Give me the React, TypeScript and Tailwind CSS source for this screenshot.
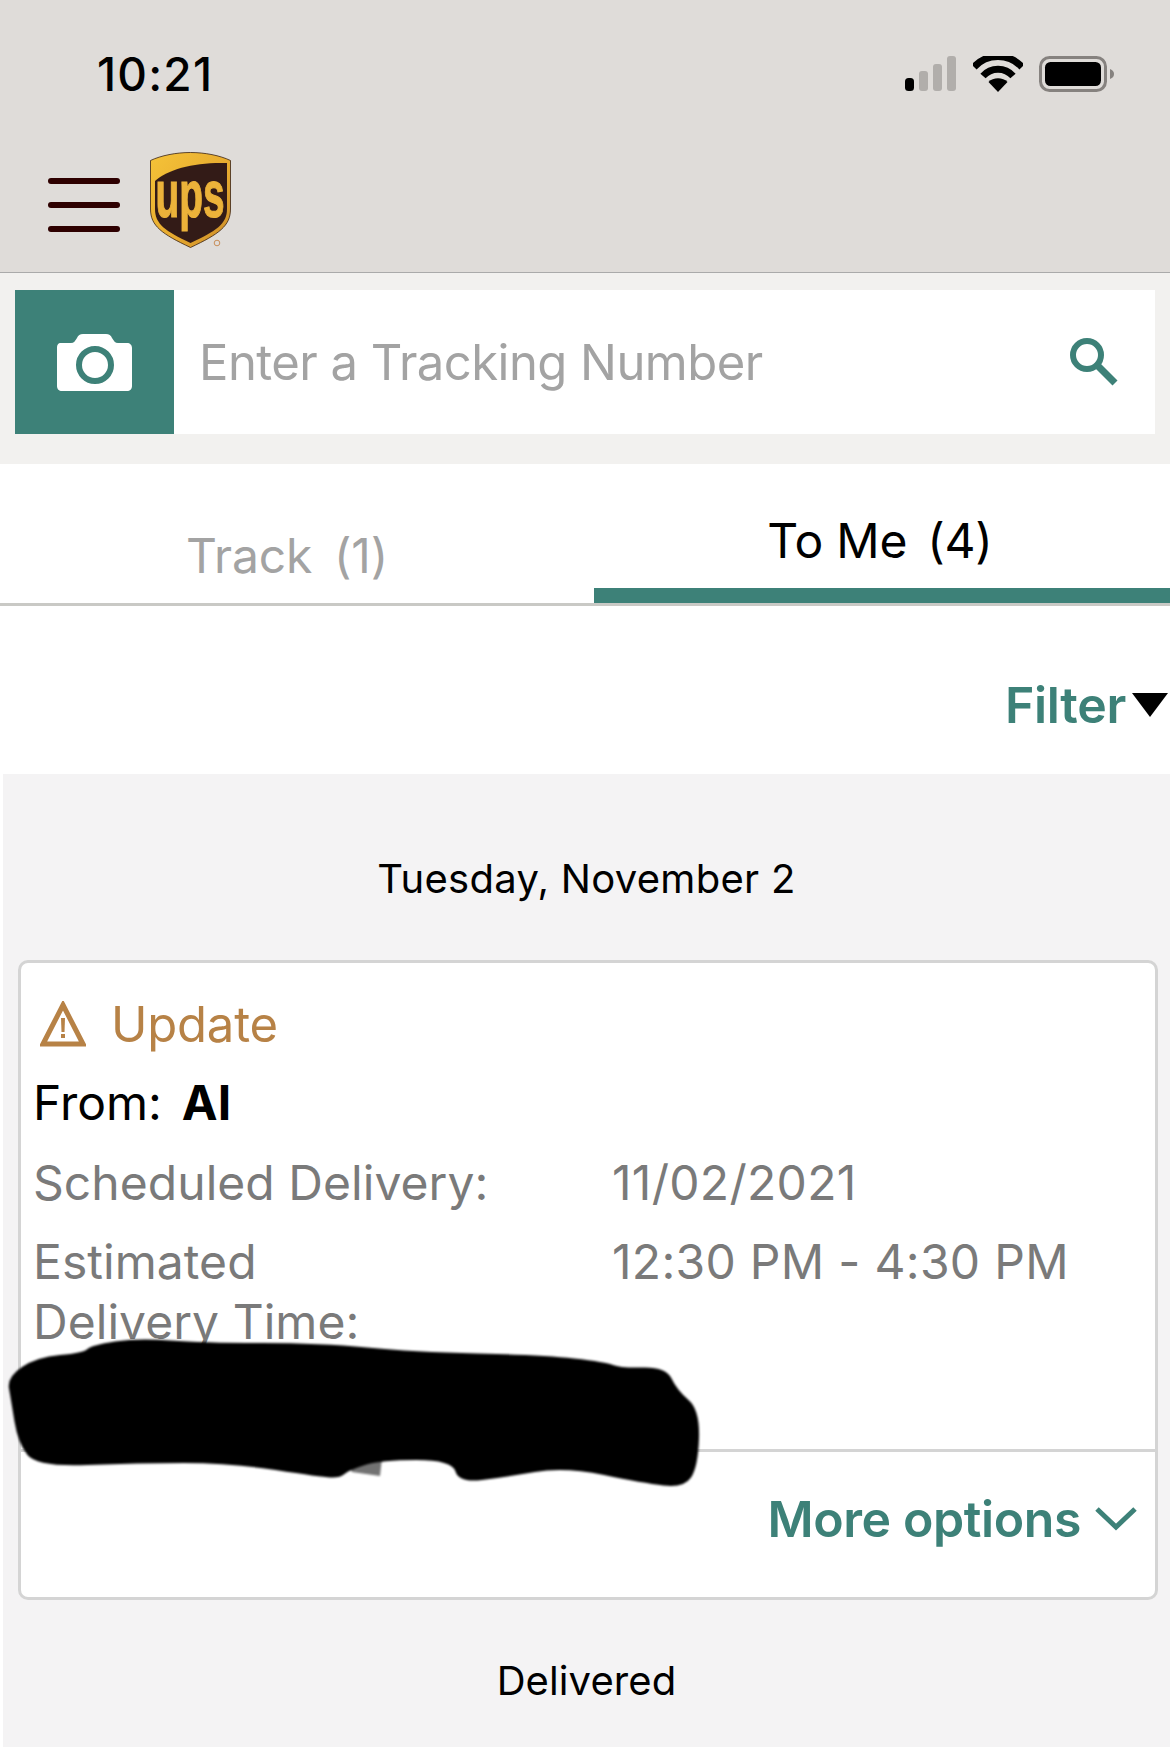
function UpsLogo() {
  return (
    <svg viewBox="0 0 84 98" className="h-[98px] w-[84px]">
      <defs>
        <linearGradient id="gold" x1="0" y1="0" x2="1" y2="1">
          <stop offset="0" stopColor="#f5c338" />
          <stop offset="0.6" stopColor="#e6a92f" />
          <stop offset="1" stopColor="#c98a28" />
        </linearGradient>
      </defs>
      <path
        d="M40.500 0.500C26 0.500 11 3.500 0.500 8.500V57C0.500 74 12 82 40.500 95.500C69 82 80.500 74 80.500 57V8.500C70 3.500 55 0.500 40.500 0.500Z"
        fill="url(#gold)"
        stroke="#3a2212"
        strokeWidth="0.8"
      />
      <path
        d="M77 11V57C77 72 66 79 40.500 91C15 79 5 72 5 57V29C18 17 45 10 77 11Z"
        fill="#331b17"
      />
      <text
        x="0"
        y="0"
        transform="translate(40 65) scale(0.58 1)"
        textAnchor="middle"
        fill="#ecb23a"
        stroke="#ecb23a"
        strokeWidth="1.200"
        fontFamily="Liberation Sans, sans-serif"
        fontWeight="700"
        fontSize="67"
      >
        ups
      </text>
      <circle cx="67" cy="91" r="2.800" fill="none" stroke="#c98f5a" strokeWidth="1" />
    </svg>
  );
}

function StatusIcons() {
  return (
    <div className="flex items-center">
      <svg viewBox="0 0 52 36" className="h-[36px] w-[52px]">
        <rect x="0" y="22" width="9" height="13" rx="3.500" fill="#000" />
        <rect x="14" y="15" width="9" height="20" rx="3" fill="#b1aeab" />
        <rect x="28" y="8" width="9" height="27" rx="3" fill="#b1aeab" />
        <rect x="42" y="0" width="9" height="35" rx="3" fill="#b1aeab" />
      </svg>
      <svg viewBox="0 0 50 36" className="ml-[16px] h-[36px] w-[50px]">
        <path d="M1 11C14 -3 36 -3 49 11" fill="none" stroke="#000" strokeWidth="7" strokeLinejoin="round" />
        <path d="M10 20C18 11 32 11 40 20" fill="none" stroke="#000" strokeWidth="7" />
        <path d="M25 36L15.500 26C20 21 30 21 34.500 26Z" fill="#000" />
      </svg>
      <svg viewBox="0 0 76 36" className="ml-[16px] h-[36px] w-[76px]">
        <rect x="1.500" y="1.500" width="65" height="33" rx="9" fill="none" stroke="#86827f" strokeWidth="3" />
        <rect x="6" y="6" width="56" height="24" rx="5.500" fill="#000" />
        <path d="M71 13C74 14 75 16 75 18C75 20 74 22 71 23Z" fill="#86827f" />
      </svg>
    </div>
  );
}

const blobPoints = [
  [7, 1377], [37, 1357], [83, 1353], [92, 1345], [138, 1338], [202, 1343], [321, 1343], [413, 1352],
  [542, 1355], [606, 1362], [620, 1368], [666, 1367], [677, 1390], [700, 1410], [698, 1467], [684, 1488],
  [643, 1483], [565, 1467], [505, 1477], [459, 1483], [452, 1460], [381, 1460], [349, 1470], [340, 1478],
  [321, 1477], [230, 1463], [138, 1463], [37, 1467], [18, 1443], [11, 1400],
];

// rounds the corners of the scribble by curving through the midpoints
function smoothPath(points: number[][]) {
  const mid = (a: number[], b: number[]) => `${(a[0] + b[0]) / 2} ${(a[1] + b[1]) / 2}`;
  let d = `M${mid(points[points.length - 1], points[0])}`;
  points.forEach((p, i) => {
    d += `Q${p[0]} ${p[1]} ${mid(p, points[(i + 1) % points.length])}`;
  });
  return d + "Z";
}

function Redaction() {
  return (
    <svg viewBox="0 1330 710 170" className="absolute left-0 top-[1330px] h-[170px] w-[710px]">
      <defs>
        <filter id="soft">
          <feGaussianBlur stdDeviation="1.200" />
        </filter>
      </defs>
      <path d="M345 1458H382L380 1476L352 1472Z" fill="#000" opacity="0.55" filter="url(#soft)" />
      <path d={smoothPath(blobPoints)} fill="#000" filter="url(#soft)" />
    </svg>
  );
}

export default function App() {
  return (
    <div className="relative h-[1747px] w-[1170px] overflow-hidden bg-white font-['Inter',sans-serif]">
      <header className="h-[273px] border-b border-[#aaaaaa] bg-[#dfdcd9]">
        <div className="flex h-[148px] items-center justify-between pl-[97px] pr-[55px]">
          <span className="text-[46px] font-medium leading-none tracking-[1.2px] text-black">10:21</span>
          <StatusIcons />
        </div>
        <div className="flex items-start pl-[48px]">
          <div className="mt-[30px] flex w-[72px] flex-col gap-[18px]">
            <div className="h-[6px] rounded-full bg-[#2e0000]" />
            <div className="h-[6px] rounded-full bg-[#2e0000]" />
            <div className="h-[6px] rounded-full bg-[#2e0000]" />
          </div>
          <div className="ml-[30px] mt-[4px]">
            <UpsLogo />
          </div>
        </div>
      </header>

      <div className="h-[191px] bg-[#f2f1ef] px-[15px] pt-[17px]">
        <div className="flex h-[144px] items-center bg-white pr-[37px]">
          <div className="flex h-full w-[159px] items-center justify-center bg-[#3d8178]">
            <svg viewBox="0 0 75 57" className="h-[57px] w-[75px]">
              <path
                d="M4 9H14C17 9 18 7 20 4C21 1.500 23 0 26 0H49C52 0 54 1.500 55 4C57 7 58 9 61 9H70C73 9 75 11 75 14V52C75 55 73 57 70 57H5C2 57 0 55 0 52V14C0 11 1 9 4 9Z"
                fill="#fff"
              />
              <circle cx="38" cy="31" r="16" fill="none" stroke="#3d8178" strokeWidth="6" />
            </svg>
          </div>
          <span className="ml-[25px] flex-1 text-[49px] leading-none tracking-[-0.55px] text-[#a3a3a3]">
            Enter a Tracking Number
          </span>
          <svg viewBox="0 0 48 48" className="h-[48px] w-[48px]">
            <circle cx="17" cy="17" r="14" fill="none" stroke="#3d8178" strokeWidth="6" />
            <path d="M27 27L45 45" fill="none" stroke="#3d8178" strokeWidth="7" />
          </svg>
        </div>
      </div>

      <div className="flex h-[142px] border-b-[3px] border-[#c9c9c5]">
        <div className="flex w-[594px] items-center justify-center gap-[22px] pr-[20px] pt-[45px] text-[48px] leading-none tracking-[-0.2px] text-[#a3a3a3]">
          <span>Track</span>
          <span>(1)</span>
        </div>
        <div className="flex flex-1 items-center justify-center gap-[20px] border-b-[15px] border-[#3d8178] pr-[4px] pt-[30px] text-[48px] leading-none tracking-[-0.2px] text-black">
          <span>To Me</span>
          <span>(4)</span>
        </div>
      </div>

      <div className="flex h-[168px] items-center justify-end pr-[2px] pt-[29px]">
        <span className="text-[50px] font-semibold leading-none tracking-[-0.3px] text-[#3d8178]">Filter</span>
        <svg viewBox="0 0 36 24" className="ml-[6px] h-[24px] w-[36px]">
          <path d="M0 0H36L18 24Z" fill="#000" />
        </svg>
      </div>

      <main className="ml-[3px] h-[973px] bg-[#f4f3f4] pt-[75px]">
        <p className="text-center text-[40px] leading-[60px] tracking-[0.3px] text-black">Tuesday, November 2</p>
        <section className="ml-[15px] mt-[51px] h-[640px] w-[1140px] rounded-[10px] border-[3px] border-[#d4d4d4] bg-white">
          <div className="flex h-[122px] items-center pl-[19px]">
            <svg viewBox="0 0 46 46" className="h-[46px] w-[46px]">
              <path d="M23 4L43 43H3Z" fill="none" stroke="#b78246" strokeWidth="5" strokeLinejoin="miter" />
              <path d="M21 17H25L24.500 31H21.500Z" fill="#b78246" />
              <rect x="21" y="33" width="4" height="4" fill="#b78246" />
            </svg>
            <span className="ml-[25px] text-[49px] leading-none tracking-[-0.2px] text-[#b78246]">Update</span>
          </div>
          <div className="flex h-[36px] items-center gap-[20px] pl-[12px] text-[48px] leading-none text-black">
            <span>From:</span>
            <span className="font-bold">AI</span>
          </div>
          <div className="mt-[32px] flex pl-[12px] text-[48px] leading-[60px] text-[#7a7a7a]">
            <span className="w-[579px] tracking-[0.05px]">Scheduled Delivery:</span>
            <span className="tracking-[0.3px]">11/02/2021</span>
          </div>
          <div className="mt-[19px] flex pl-[12px] text-[48px] leading-[60px] text-[#7a7a7a]">
            <span className="w-[579px] tracking-[0.05px]">
              Estimated
              <br />
              Delivery Time:
            </span>
            <span className="tracking-[0.3px]">12:30 PM - 4:30 PM</span>
          </div>
          <div className="mt-[97px] border-t-[3px] border-[#d4d4d4]" />
          <div className="flex h-[135px] items-center justify-end pb-[2px] pr-[18px]">
            <span className="text-[50px] font-semibold leading-none tracking-[-0.4px] text-[#3d8178]">More options</span>
            <svg viewBox="0 0 42 25" className="ml-[14px] h-[25px] w-[42px]">
              <path d="M2 3L21 21L40 3" fill="none" stroke="#3d8178" strokeWidth="5" />
            </svg>
          </div>
        </section>
        <p className="mt-[51px] text-center text-[40px] leading-[60px] tracking-[0.1px] text-black">Delivered</p>
      </main>

      <Redaction />
    </div>
  );
}
